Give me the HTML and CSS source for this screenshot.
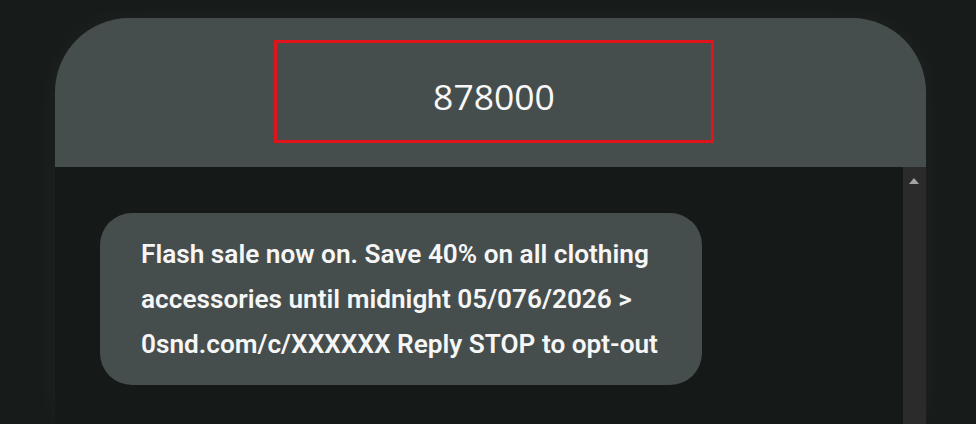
FILE: index.html
```html
<!DOCTYPE html>
<html><head><title>Messages - 878000</title>
<meta charset="utf-8">
<link rel="stylesheet" href="styles.css">
</head>
<body>
<div class="phone">
	<div class="phone-head">
		<div class="sender">878000</div>
	</div>
	<div class="thread">
		<div class="messages">
			<div class="bubble">Flash sale now on. Save 40% on all clothing accessories until midnight 05/076/2026 &gt; 0snd.com/c/XXXXXX Reply STOP to opt-out</div>
		</div>
		<div class="scrollbar"><span class="arrow-up"></span></div>
	</div>
</div>
</body></html>
```

FILE: styles.css
```css
html, body { height: 100%; }
body {
	margin: 0;
	padding: 18px 50px 0 55px;
	box-sizing: border-box;
	background-color: #171b1a;
	overflow: hidden;
}
.phone {
	display: flex;
	flex-direction: column;
	height: 100%;
	border-radius: 74px 74px 0 0;
	overflow: hidden;
	box-shadow: 0 0 30px rgba(255,255,255,0.035);
}
.phone-head {
	height: 149px;
	flex: none;
	background-color: #464e4d;
	display: flex;
	align-items: flex-start;
	padding: 22px 0 0 219px;
	box-sizing: border-box;
}
.sender {
	width: 440px;
	height: 103px;
	box-sizing: border-box;
	border: 3px solid #e0141a;
	display: flex;
	align-items: center;
	justify-content: center;
	font-family: "Open Sans", sans-serif;
	font-size: 35.5px;
	color: #f8f8f8;
	padding-top: 8px;
}
.thread {
	flex: 1;
	display: flex;
	background-color: #151918;
}
.messages {
	flex: 1;
	padding: 46px 0 0 45px;
}
.bubble {
	width: 602px;
	box-sizing: border-box;
	padding: 19px 36px 18px 41px;
	border-radius: 32px;
	background-color: #464e4d;
	color: #f6f6f6;
	font-family: Roboto, sans-serif;
	font-weight: 600;
	font-size: 26.2px;
	line-height: 45px;
}
.scrollbar {
	width: 23px;
	background-color: #2b2b2b;
	position: relative;
}
.arrow-up {
	position: absolute;
	left: 6px;
	top: 11px;
	border-left: 5px solid transparent;
	border-right: 5px solid transparent;
	border-bottom: 6px solid #a3a3a3;
}
```
